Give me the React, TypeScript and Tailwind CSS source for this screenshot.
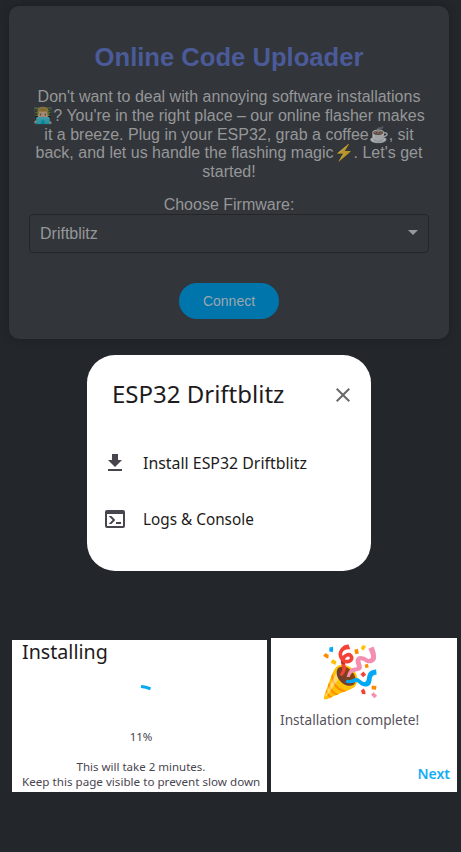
import React from "react";

function Emoji({ children }: { children: string }) {
  return <span className="opacity-65">{children}</span>;
}

const intro = [
  <>Don't want to deal with annoying software installations</>,
  <><Emoji>👨🏼‍💻</Emoji>? You're in the right place – our online flasher makes</>,
  <>it a breeze. Plug in your ESP32, grab a coffee<Emoji>☕</Emoji>, sit</>,
  <>back, and let us handle the flashing magic<Emoji>⚡</Emoji>. Let's get</>,
  <>started!</>,
];

function UploaderCard() {
  return (
    <section className="ml-[9px] mt-[6px] flex h-[333px] w-[440px] flex-col items-center rounded-[10px] bg-[#32353a] px-5 pt-9 text-[#969798] shadow-[0_0_10px_rgba(0,0,0,0.2)]">
      <h1 className="h-[30px] whitespace-nowrap text-[25.6px] font-bold leading-[30px] text-[#4b5b99]">Online Code Uploader</h1>
      <div className="mt-4 text-center text-[16px] leading-[18.8px]">
        {intro.map((line, i) => (
          <div key={i} className="h-[18.8px] whitespace-nowrap">{line}</div>
        ))}
      </div>
      <label className="mt-[14px] h-[18px] text-[16px] leading-[18px]">Choose Firmware:</label>
      <button className="flex h-[39px] w-[400px] shrink-0 items-center justify-between rounded-[4px] border border-[#232529] pl-[10px] pr-[10px] text-[16px]">
        <span className="pt-px">Driftblitz</span>
        <svg className="mb-[2px]" width="10" height="5" viewBox="0 0 10 5" fill="#97999b"><path d="M0 0h10L5 5z" /></svg>
      </button>
      <button className="mt-[30px] h-[36px] w-[100px] shrink-0 rounded-full bg-[#0075ab] pt-px text-[14px] text-[#9ba7ae]">Connect</button>
    </section>
  );
}

function DeviceDialog() {
  return (
    <section className="ml-[87px] mt-4 h-[216px] w-[284px] rounded-[28px] bg-white font-['Noto_Sans','Open_Sans',sans-serif] text-[#1d1b20]">
      <header className="flex h-[80px] items-center justify-between pl-[25px] pr-[21px]">
        <h2 className="w-[174px] origin-left pb-[3px] whitespace-nowrap text-[24px]">ESP32 Driftblitz</h2>
        <svg width="14" height="14" viewBox="5 5 14 14" fill="#69696c"><path d="M19 6.41 17.59 5 12 10.59 6.41 5 5 6.41 10.59 12 5 17.59 6.41 19 12 13.41 17.59 19 19 17.59 13.41 12z" /></svg>
      </header>
      <div className="flex h-[55px] items-center pl-4">
        <svg width="24" height="24" viewBox="0 0 24 24" fill="#49454f"><path d="M5 20h14v-2H5v2zM19 9h-4V3H9v6H5l7 7 7-7z" /></svg>
        <span className="ml-4 origin-left scale-x-[0.993] whitespace-nowrap text-[16px]">Install ESP32 Driftblitz</span>
      </div>
      <div className="flex h-[57px] items-center pl-4">
        <svg width="24" height="24" viewBox="0 0 24 24" fill="#49454f"><path d="M20 3H4a2 2 0 0 0-2 2v14a2 2 0 0 0 2 2h16a2 2 0 0 0 2-2V5a2 2 0 0 0-2-2m0 16H4V7h16zm-7-2v-2h5v2zm-3.4-4L5.6 9h2.8l3.3 3.3c.4.4.4 1 0 1.4L8.4 17H5.6z" /></svg>
        <span className="ml-4 origin-left scale-x-[0.957] whitespace-nowrap text-[16px]">Logs &amp; Console</span>
      </div>
    </section>
  );
}

function InstallingPanel() {
  return (
    <section className="mt-[2px] flex h-[152px] w-[255px] flex-col bg-white text-[#49454f]">
      <h2 className="ml-[10px] h-[24px] origin-left scale-x-[1.035] text-[19px] leading-[24px] text-[#1d1b20]">Installing</h2>
      <svg className="ml-[129px] mt-[20px]" width="12" height="8" viewBox="0 0 12 8" fill="none" stroke="#03a9f4" strokeWidth="3"><path d="M0 2.5Q5 2.8 9.5 4.8" /></svg>
      <div className="mt-[37px] h-[16px] scale-x-105 pl-[3px] text-center text-[11px] leading-[16px]">11%</div>
      <div className="mt-[14px] h-[15px] whitespace-nowrap pl-[3px] text-center text-[11.5px] leading-[15px]">This will take 2 minutes.</div>
      <div className="ml-[10px] h-[15px] origin-left scale-x-[1.012] whitespace-nowrap text-[11.5px] leading-[15px]">Keep this page visible to prevent slow down</div>
    </section>
  );
}

function CompletePanel() {
  return (
    <section className="flex h-[154px] w-[186px] flex-col bg-white text-[#56525b]">
      <div className="ml-[48px] mt-[4px] h-[57px] text-[50px] leading-[57px]">🎉</div>
      <div className="ml-[9px] mt-[11px] h-[20px] origin-left scale-x-[0.975] whitespace-nowrap text-[14px] leading-[20px]">Installation complete!</div>
      <div className="mr-[7px] mt-[34px] h-[20px] text-right text-[14px] font-semibold leading-[20px] text-[#14adf5]">Next</div>
    </section>
  );
}

export default function App() {
  return (
    <main className="flow-root h-[852px] w-[461px] overflow-hidden bg-[#23272b] font-['Liberation_Sans',Arial,sans-serif]">
      <UploaderCard />
      <DeviceDialog />
      <div className="ml-3 mt-[67px] flex gap-1 font-['Noto_Sans','Open_Sans',sans-serif]">
        <InstallingPanel />
        <CompletePanel />
      </div>
    </main>
  );
}
